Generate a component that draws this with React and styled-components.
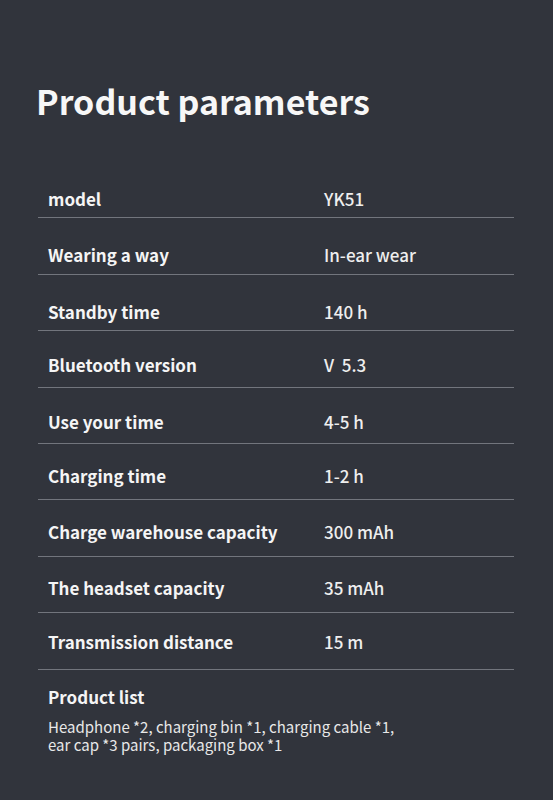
import React from "react";
import styled, { createGlobalStyle } from "styled-components";

const GlobalStyle = createGlobalStyle`
  html, body {
    margin: 0;
    padding: 0;
    background: #31343c;
  }
  body {
    font-family: "Noto Sans CJK SC", "Noto Sans", sans-serif;
  }
`;

const rows = [
  ["model", "YK51"],
  ["Wearing a way", "In-ear wear"],
  ["Standby time", "140 h"],
  ["Bluetooth version", "V  5.3"],
  ["Use your time", "4-5 h"],
  ["Charging time", "1-2 h"],
  ["Charge warehouse capacity", "300 mAh"],
  ["The headset capacity", "35 mAh"],
  ["Transmission distance", "15 m"],
];

// text sits a little higher in each lower row of the original
const lift = [0, 0, 0, 3, 3, 5, 5, 6, 8];

export default function App() {
  return (
    <>
      <GlobalStyle />
      <Page>
        <Title>Product parameters</Title>
        <Table>
          {rows.map(([label, value], i) => (
            <Row key={label} $lift={lift[i]}>
              <Label>{label}</Label>
              <Value>{value}</Value>
            </Row>
          ))}
        </Table>
        <ListBlock>
          <ListTitle>Product list</ListTitle>
          <ListBody>
            Headphone *2, charging bin *1, charging cable *1,
            <br />
            ear cap *3 pairs, packaging box *1
          </ListBody>
        </ListBlock>
      </Page>
    </>
  );
}

const Page = styled.div`
  width: 553px;
  height: 800px;
  box-sizing: border-box;
  padding: 80px 39px 0 38px;
  background: #31343c;
  color: #fff;
`;

const Title = styled.h1`
  margin: 0 0 0 -2px;
  font-size: 34px;
  line-height: 42px;
  font-weight: 700;
  color: #f7f7f7;
`;

const Table = styled.div`
  margin-top: 40px;
  display: flex;
  flex-direction: column;
`;

const Row = styled.div`
  height: 56.4px;
  box-sizing: border-box;
  display: flex;
  align-items: flex-start;
  padding: ${(p) => 25 - p.$lift}px 0 0 10px;
  border-bottom: 1.5px solid #72757d;
`;

const Label = styled.div`
  width: 276px;
  font-size: 17px;
  line-height: 24px;
  font-weight: 700;
  color: #f5f5f5;
`;

const Value = styled.div`
  font-size: 17px;
  line-height: 24px;
  font-weight: 500;
  color: #eeeeee;
  white-space: pre;
`;

const ListBlock = styled.div`
  padding: 15px 0 0 10px;
`;

const ListTitle = styled.div`
  font-size: 17px;
  line-height: 24px;
  font-weight: 700;
  color: #f5f5f5;
`;

const ListBody = styled.div`
  margin-top: 9px;
  font-size: 15px;
  line-height: 18px;
  font-weight: 400;
  color: #e8e8e8;
`;
